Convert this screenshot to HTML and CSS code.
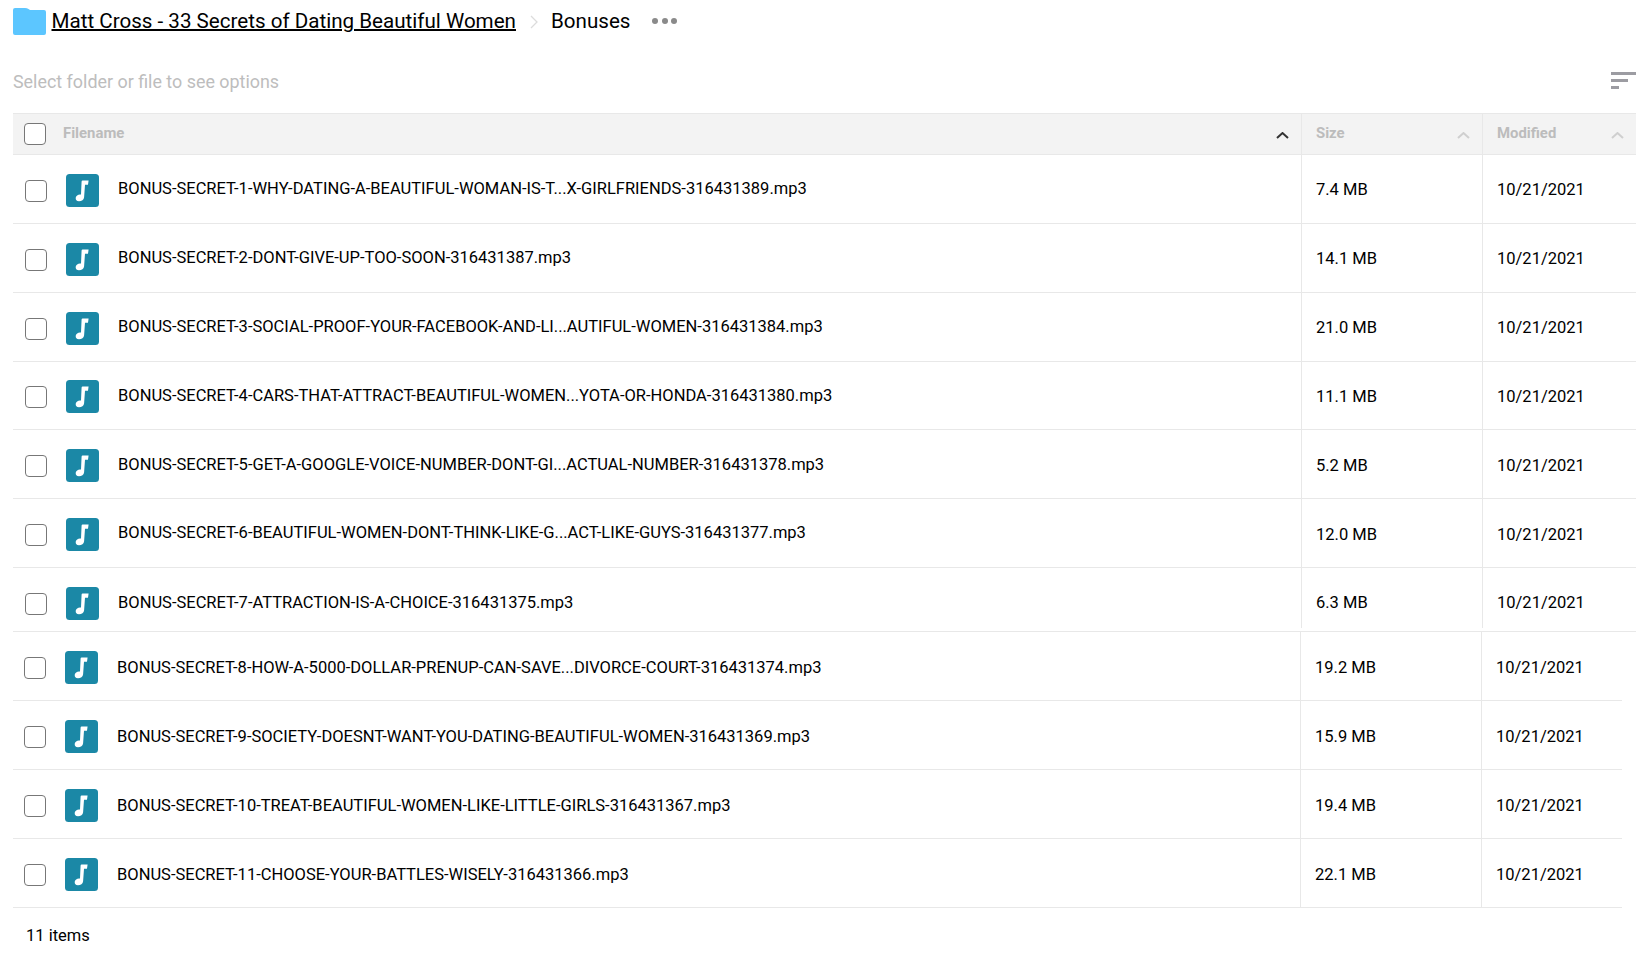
FILE: index.html
```html
<!DOCTYPE html>
<html lang="en">
<head>
<meta charset="utf-8">
<title>Bonuses</title>
<link rel="stylesheet" href="styles.css">
</head>
<body>
<svg width="0" height="0" class="defs">
  <symbol id="note" viewBox="0 0 33 33">
    <rect width="33" height="33" rx="3.5" fill="#1b88a6"/>
    <path fill="#fff" d="M16.6 6.5H22.6L22 10.7H19L18.1 23.2C17.9 26 15.6 27.2 13 27.2C10.6 27.2 9.5 25.7 9.7 23.7C10 21.5 12.5 20.1 15 20.6L15.6 7.5Q15.7 6.5 16.6 6.5Z"/>
  </symbol>
  <symbol id="chev" viewBox="0 0 13 7">
    <path d="M1 6L6.5 1L12 6" fill="none" stroke="currentColor" stroke-width="2"/>
  </symbol>
</svg>

<nav class="crumbs">
  <svg class="folder" width="33" height="27" viewBox="0 0 33 27"><path fill="#5cc6ff" d="M2 0H12Q14 0 15.5 1L17 2H31Q33 2 33 4V25Q33 27 31 27H2Q0 27 0 25V2Q0 0 2 0Z"/></svg>
  <a class="crumb-link" href="#">Matt Cross - 33 Secrets of Dating Beautiful Women</a>
  <svg class="crumb-sep" width="8" height="14" viewBox="0 0 8 14"><path d="M1 1L7 7L1 13" fill="none" stroke="#dcdcdc" stroke-width="1.3"/></svg>
  <span class="crumb-current">Bonuses</span>
  <span class="dots"><i></i><i></i><i></i></span>
</nav>

<div class="actions">
  <span class="hint">Select folder or file to see options</span>
  <span class="sort-icon"><i class="s1"></i><i class="s2"></i><i class="s3"></i></span>
</div>

<div class="table">
  <div class="thead grid-a">
    <div class="cell name-cell">
      <span class="box head-box"></span>
      <span class="th-label">Filename</span>
      <svg class="chev chev-dark" width="13" height="7"><use href="#chev"/></svg>
    </div>
    <div class="cell data-cell"><span class="th-label">Size</span><svg class="chev" width="13" height="7"><use href="#chev"/></svg></div>
    <div class="cell data-cell last"><span class="th-label">Modified</span><svg class="chev" width="13" height="7"><use href="#chev"/></svg></div>
  </div>

  <div class="page page-a">
    <div class="row grid-a"><div class="cell name-cell"><span class="box"></span><svg class="icon" width="33" height="33"><use href="#note"/></svg><span class="fname">BONUS-SECRET-1-WHY-DATING-A-BEAUTIFUL-WOMAN-IS-T...X-GIRLFRIENDS-316431389.mp3</span></div><div class="cell data-cell">7.4 MB</div><div class="cell data-cell last">10/21/2021</div></div>
    <div class="row grid-a"><div class="cell name-cell"><span class="box"></span><svg class="icon" width="33" height="33"><use href="#note"/></svg><span class="fname">BONUS-SECRET-2-DONT-GIVE-UP-TOO-SOON-316431387.mp3</span></div><div class="cell data-cell">14.1 MB</div><div class="cell data-cell last">10/21/2021</div></div>
    <div class="row grid-a"><div class="cell name-cell"><span class="box"></span><svg class="icon" width="33" height="33"><use href="#note"/></svg><span class="fname">BONUS-SECRET-3-SOCIAL-PROOF-YOUR-FACEBOOK-AND-LI...AUTIFUL-WOMEN-316431384.mp3</span></div><div class="cell data-cell">21.0 MB</div><div class="cell data-cell last">10/21/2021</div></div>
    <div class="row grid-a"><div class="cell name-cell"><span class="box"></span><svg class="icon" width="33" height="33"><use href="#note"/></svg><span class="fname">BONUS-SECRET-4-CARS-THAT-ATTRACT-BEAUTIFUL-WOMEN...YOTA-OR-HONDA-316431380.mp3</span></div><div class="cell data-cell">11.1 MB</div><div class="cell data-cell last">10/21/2021</div></div>
    <div class="row grid-a"><div class="cell name-cell"><span class="box"></span><svg class="icon" width="33" height="33"><use href="#note"/></svg><span class="fname">BONUS-SECRET-5-GET-A-GOOGLE-VOICE-NUMBER-DONT-GI...ACTUAL-NUMBER-316431378.mp3</span></div><div class="cell data-cell">5.2 MB</div><div class="cell data-cell last">10/21/2021</div></div>
    <div class="row grid-a"><div class="cell name-cell"><span class="box"></span><svg class="icon" width="33" height="33"><use href="#note"/></svg><span class="fname">BONUS-SECRET-6-BEAUTIFUL-WOMEN-DONT-THINK-LIKE-G...ACT-LIKE-GUYS-316431377.mp3</span></div><div class="cell data-cell">12.0 MB</div><div class="cell data-cell last">10/21/2021</div></div>
    <div class="row row-cut grid-a"><div class="cell name-cell"><span class="box"></span><svg class="icon" width="33" height="33"><use href="#note"/></svg><span class="fname">BONUS-SECRET-7-ATTRACTION-IS-A-CHOICE-316431375.mp3</span></div><div class="cell data-cell">6.3 MB</div><div class="cell data-cell last">10/21/2021</div></div>
  </div>

  <div class="page page-b">
    <div class="row grid-b"><div class="cell name-cell"><span class="box"></span><svg class="icon" width="33" height="33"><use href="#note"/></svg><span class="fname">BONUS-SECRET-8-HOW-A-5000-DOLLAR-PRENUP-CAN-SAVE...DIVORCE-COURT-316431374.mp3</span></div><div class="cell data-cell">19.2 MB</div><div class="cell data-cell last">10/21/2021</div></div>
    <div class="row grid-b"><div class="cell name-cell"><span class="box"></span><svg class="icon" width="33" height="33"><use href="#note"/></svg><span class="fname">BONUS-SECRET-9-SOCIETY-DOESNT-WANT-YOU-DATING-BEAUTIFUL-WOMEN-316431369.mp3</span></div><div class="cell data-cell">15.9 MB</div><div class="cell data-cell last">10/21/2021</div></div>
    <div class="row grid-b"><div class="cell name-cell"><span class="box"></span><svg class="icon" width="33" height="33"><use href="#note"/></svg><span class="fname">BONUS-SECRET-10-TREAT-BEAUTIFUL-WOMEN-LIKE-LITTLE-GIRLS-316431367.mp3</span></div><div class="cell data-cell">19.4 MB</div><div class="cell data-cell last">10/21/2021</div></div>
    <div class="row grid-b"><div class="cell name-cell"><span class="box"></span><svg class="icon" width="33" height="33"><use href="#note"/></svg><span class="fname">BONUS-SECRET-11-CHOOSE-YOUR-BATTLES-WISELY-316431366.mp3</span></div><div class="cell data-cell">22.1 MB</div><div class="cell data-cell last">10/21/2021</div></div>
  </div>
</div>

<footer class="count">11 items</footer>
</body>
</html>
```

FILE: styles.css
```css
* { box-sizing: border-box; }
html, body { margin: 0; padding: 0; height: 100%; overflow: hidden; }
body { background: #fff; color: #000; font-family: Roboto, "Liberation Sans", sans-serif; font-size: 16.5px; }
.defs { position: absolute; }

.crumbs { height: 42px; padding: 8px 0 0 13px; display: flex; align-items: flex-start; }
.folder { flex: none; }
.crumb-link { margin-left: 5.5px; font-size: 20.6px; line-height: 26px; color: #000; text-decoration: underline 2px; }
.crumb-sep { margin: 7px 0 0 14px; flex: none; }
.crumb-current { margin-left: 13px; font-size: 20.6px; line-height: 26px; }
.dots { margin: 10px 0 0 22px; display: flex; gap: 3.5px; }
.dots i { width: 6px; height: 6px; border-radius: 50%; background: #8a8a8a; }

.actions { height: 71px; padding: 0 10px 0 13px; display: flex; justify-content: space-between; }
.hint { margin-top: 28px; font-size: 17.9px; line-height: 24px; color: #bdbdbd; }
.sort-icon { margin-top: 30px; width: 25px; display: flex; flex-direction: column; gap: 4px; }
.sort-icon i { height: 3px; background: #9c9ca2; display: block; }
.sort-icon .s2 { width: 17px; }
.sort-icon .s3 { width: 8px; }

.table { margin-left: 13px; }
.grid-a { display: grid; grid-template-columns: 1288px 181px 154px; width: 1623px; }
.grid-b { display: grid; grid-template-columns: 1287px 181px 141px; width: 1609px; }

.thead { height: 42px; background: #f3f3f3; border-top: 1px solid #e8e8e8; border-bottom: 1px solid #e8e8e8; }
.cell { display: flex; align-items: center; min-width: 0; }
.data-cell { border-left: 1px solid #e8e8e8; padding-left: 14px; }
.thead .data-cell { justify-content: space-between; padding-right: 12px; }

.name-cell { padding-left: 12px; }
.page-b .name-cell { padding-left: 11px; }
.thead .name-cell { padding-left: 11px; }
.box { flex: none; width: 22px; height: 22px; border: 1.5px solid #777; border-radius: 4px; background: #fff; margin-top: 2px; }
.head-box { margin-top: 0; }
.th-label { font-size: 14.9px; font-weight: 700; color: #bcbcbc; margin-bottom: 2px; }
.name-cell .th-label { margin-left: 17px; }
.chev { color: #cfcfcf; flex: none; margin-top: 3px; }
.chev-dark { color: #333; margin-left: auto; margin-right: 12px; }

.row { height: 68.85px; border-bottom: 1px solid #e8e8e8; }
.row .cell { padding-top: 2px; }
.page-b .row { height: 69px; }
.row-cut { height: 64px; }
.row-cut .name-cell { margin-bottom: -5.5px; }
.row-cut .data-cell { height: 60px; padding-top: 9px; }
.page-b .data-cell { padding-top: 2px; }
.page-b .fname { margin-top: 1px; margin-bottom: 0; }
.icon { flex: none; margin-left: 19px; margin-top: 1px; }
.fname { margin-left: 19px; margin-bottom: 1.5px; white-space: nowrap; line-height: 20px; }

.count { margin: 18px 0 0 26px; line-height: 20px; }
```
